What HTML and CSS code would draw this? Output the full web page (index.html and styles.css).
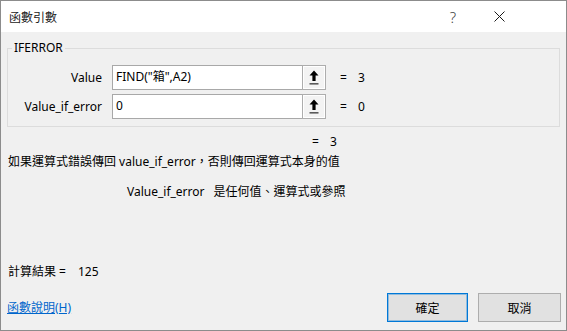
FILE: index.html
```html
<!DOCTYPE html>
<html lang="zh-Hant">
<head>
<meta charset="utf-8">
<title>函數引數</title>
<link rel="stylesheet" href="styles.css">
</head>
<body>
<div class="dialog">
  <div class="titlebar">
    <div class="title">函數引數</div>
    <div class="tb-btn help">?</div>
    <div class="tb-btn close">
      <svg width="11" height="11" viewBox="0 0 11 11"><path d="M0.5 0.5 L10.5 10.5 M10.5 0.5 L0.5 10.5" stroke="#1a1a1a" stroke-width="1" fill="none"/></svg>
    </div>
  </div>
  <div class="content">
    <div class="group">
      <div class="group-title">IFERROR</div>
      <div class="row">
        <div class="label">Value</div>
        <div class="input">FIND("箱",A2)</div>
        <div class="ref-btn"><svg width="22" height="23" viewBox="0 0 22 23"><path d="M11 4.5 L15.5 9.5 L12.6 9.5 L12.6 15 L9.4 15 L9.4 9.5 L6.5 9.5 Z" fill="#000"/><rect x="6.5" y="17" width="9" height="1.6" fill="#5a5a5a"/></svg></div>
        <div class="eq">=</div>
        <div class="val">3</div>
      </div>
      <div class="row">
        <div class="label">Value_if_error</div>
        <div class="input">0</div>
        <div class="ref-btn"><svg width="22" height="23" viewBox="0 0 22 23"><path d="M11 4.5 L15.5 9.5 L12.6 9.5 L12.6 15 L9.4 15 L9.4 9.5 L6.5 9.5 Z" fill="#000"/><rect x="6.5" y="17" width="9" height="1.6" fill="#5a5a5a"/></svg></div>
        <div class="eq">=</div>
        <div class="val">0</div>
      </div>
    </div>
    <div class="total"><span class="eq2">=</span><span class="val2">3</span></div>
    <div class="desc">如果運算式錯誤傳回 value_if_error，否則傳回運算式本身的值</div>
    <div class="arg-desc"><span class="arg-name">Value_if_error</span><span class="arg-text">是任何值、運算式或參照</span></div>
    <div class="result">計算結果 =<span class="result-val">125</span></div>
    <div class="footer">
      <a class="help-link" href="#">函數說明(H)</a>
      <div class="buttons">
        <button class="btn ok">確定</button>
        <button class="btn cancel">取消</button>
      </div>
    </div>
  </div>
</div>
</body>
</html>
```
FILE: styles.css
```css
html, body {
  margin: 0;
  padding: 0;
  background: #f0f0f0;
}
body {
  font-family: "Noto Sans", "Noto Sans CJK TC", sans-serif;
  font-size: 12px;
  color: #000;
}
.dialog {
  box-sizing: border-box;
  width: 567px;
  height: 331px;
  border: 1px solid #8c8c8c;
  display: flex;
  flex-direction: column;
  overflow: hidden;
}
.titlebar {
  height: 31px;
  flex: none;
  background: #fff;
  display: flex;
  align-items: center;
  padding-right: 44px;
}
.title {
  flex: 1;
  padding-left: 8px;
  font-family: "Noto Sans CJK TC", sans-serif;
  font-size: 12px;
  color: #1a1a1a;
  line-height: 16px;
}
.tb-btn {
  width: 46px;
  height: 31px;
  display: flex;
  align-items: center;
  justify-content: center;
}
.help {
  font-family: "Noto Sans", sans-serif;
  font-size: 15px;
  font-weight: 300;
  color: #444;
}
.content {
  flex: 1;
  background: #f0f0f0;
  display: flex;
  flex-direction: column;
}
.group {
  position: relative;
  margin: 16px 6px 0 6px;
  border: 1px solid #dcdcdc;
  padding: 16px 0 7px 0;
  display: flex;
  flex-direction: column;
  gap: 4px;
}
.group-title {
  position: absolute;
  top: -9px;
  left: 4px;
  padding: 0 2px;
  background: #f0f0f0;
  line-height: 16px;
  font-size: 12px;
}
.row {
  display: flex;
  align-items: center;
  height: 25px;
}
.label {
  width: 94px;
  text-align: right;
  margin-right: 10px;
  line-height: 16px;
}
.input {
  box-sizing: border-box;
  width: 190px;
  height: 25px;
  background: #fff;
  border: 1px solid #a8a8a8;
  border-right: none;
  padding: 0 3px;
  line-height: 22px;
  white-space: nowrap;
  overflow: hidden;
}
.ref-btn {
  box-sizing: border-box;
  width: 24px;
  height: 25px;
  border: 1px solid #adadad;
  background: #f3f3f3;
  box-shadow: inset 0 0 0 1px #fff;
  display: flex;
}
.eq {
  margin-left: 14px;
  line-height: 16px;
}
.val {
  margin-left: 11px;
  line-height: 16px;
}
.total {
  margin-top: 7px;
  padding-left: 311px;
  line-height: 16px;
  height: 16px;
}
.val2 {
  margin-left: 11px;
}
.desc {
  margin-top: 4px;
  padding-left: 7px;
  line-height: 16px;
  height: 16px;
}
.arg-desc {
  margin-top: 14px;
  padding-left: 126px;
  line-height: 16px;
  height: 16px;
}
.arg-text {
  margin-left: 9px;
}
.result {
  margin-top: 64px;
  padding-left: 7px;
  line-height: 16px;
  height: 16px;
}
.result-val {
  margin-left: 12px;
}
.footer {
  margin-top: 13px;
  display: flex;
  align-items: center;
  justify-content: space-between;
  padding: 0 5px 0 6px;
}
.help-link {
  color: #0066cc;
  text-decoration: underline;
  line-height: 16px;
}
.buttons {
  display: flex;
  gap: 10px;
}
.btn {
  box-sizing: border-box;
  height: 29px;
  margin: 0;
  padding: 0;
  font-family: "Noto Sans", "Noto Sans CJK TC", sans-serif;
  font-size: 12px;
  color: #000;
  background: #e1e1e1;
  border: 1px solid #adadad;
  border-radius: 0;
}
.ok {
  width: 81px;
  border-color: #0078d7;
  box-shadow: inset 0 0 0 1px rgba(0, 120, 215, 0.35);
}
.cancel {
  width: 83px;
}
```
